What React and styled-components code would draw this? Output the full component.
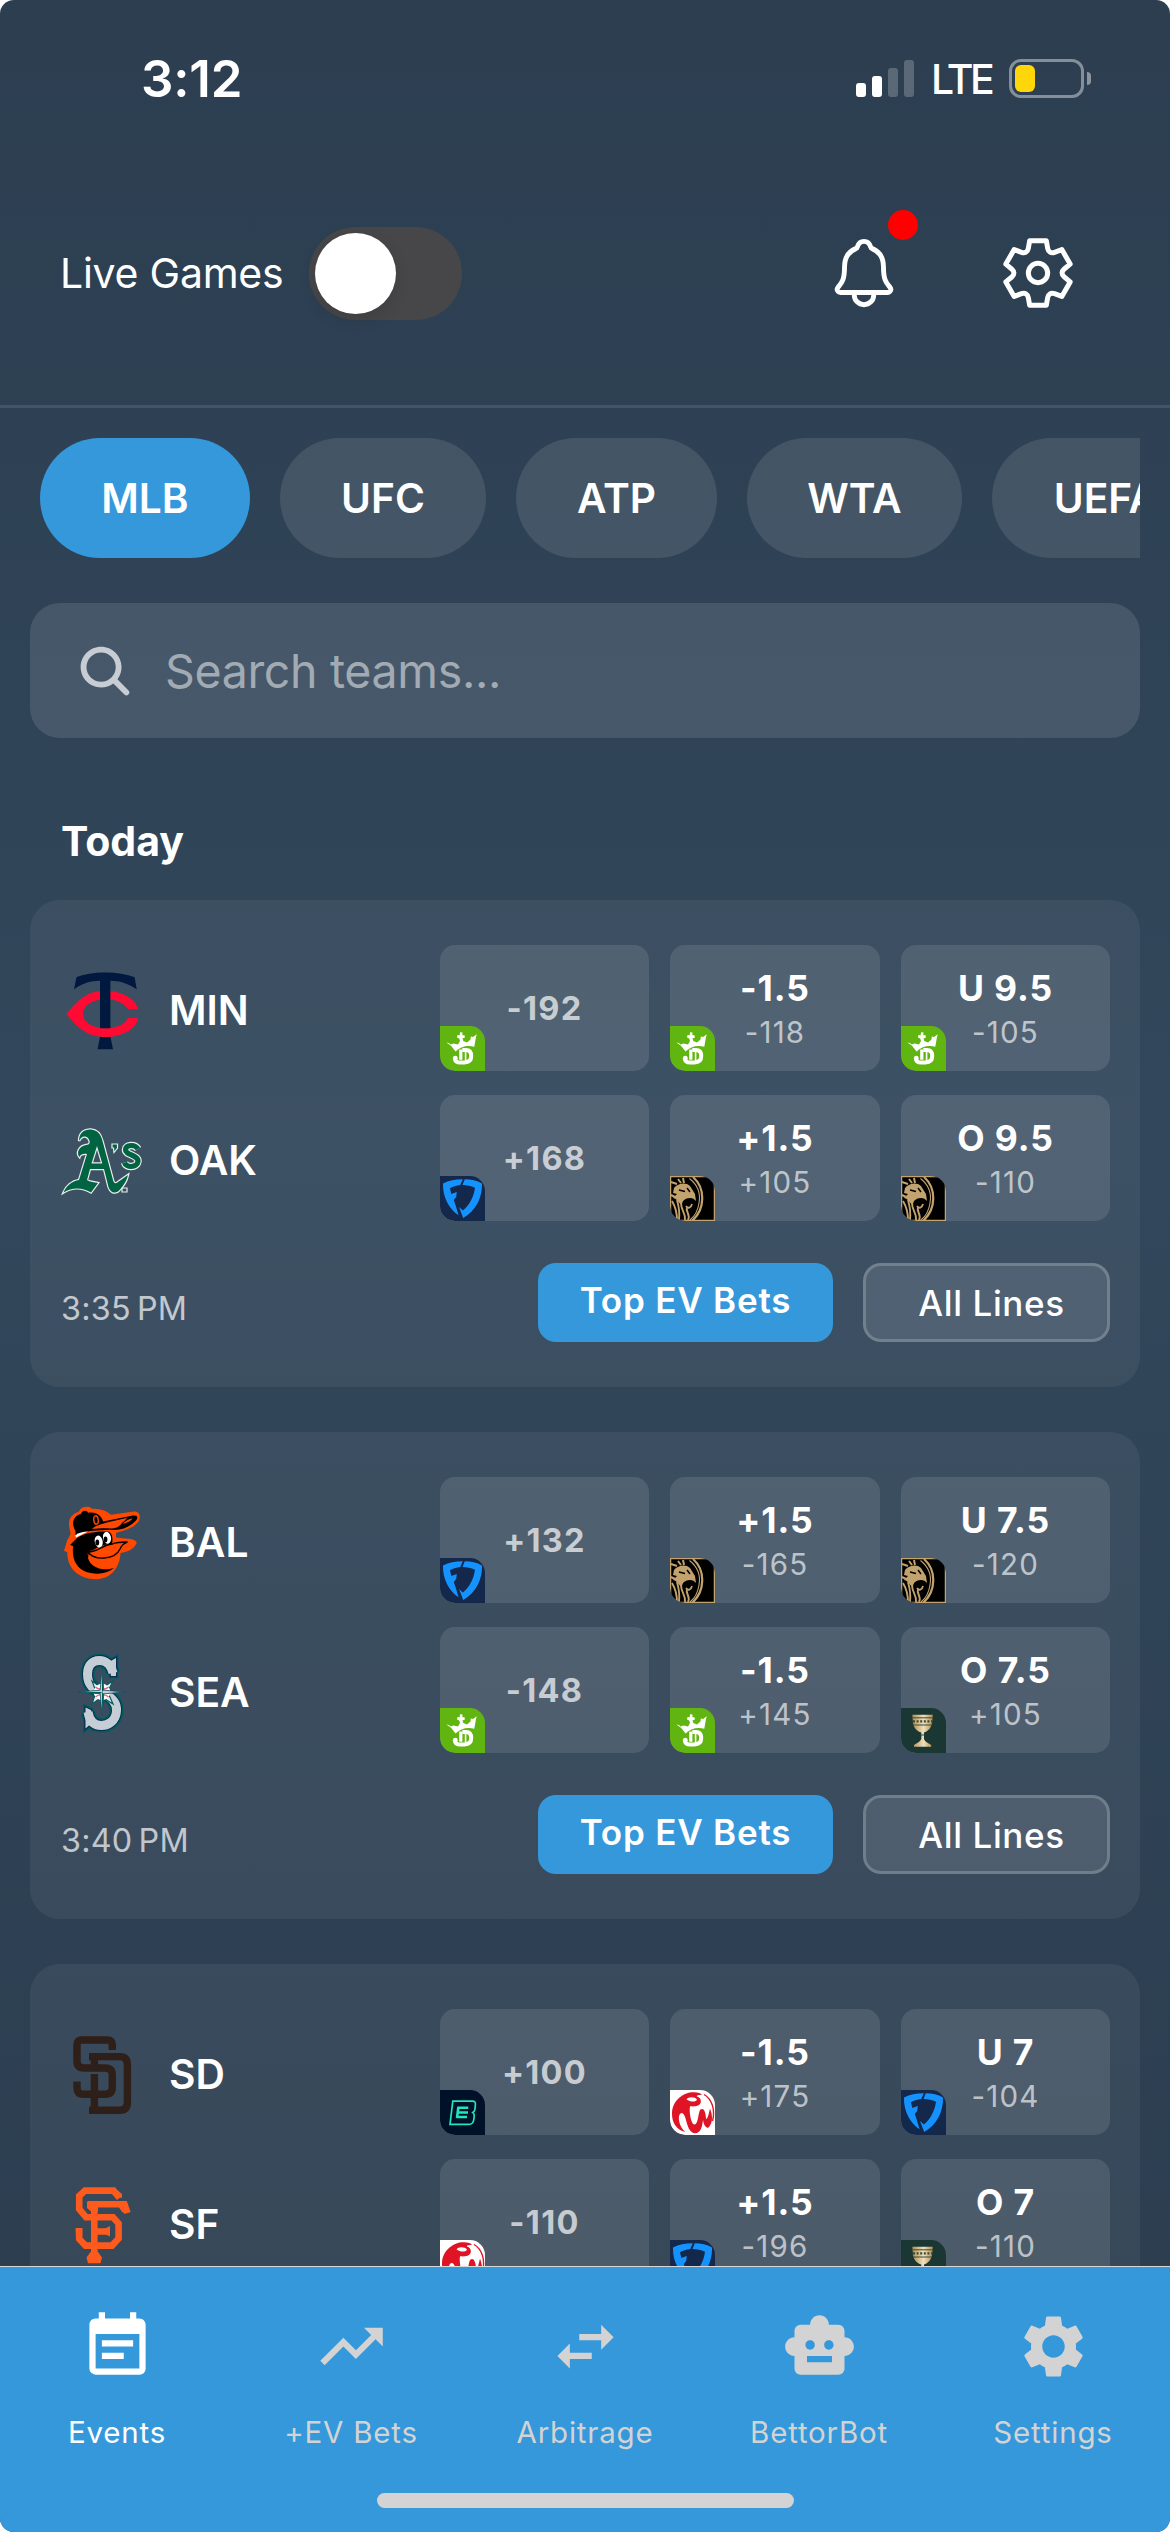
import React from "react";
import styled, { createGlobalStyle, css } from "styled-components";
import { IoNotificationsOutline, IoSearch } from "react-icons/io5";
import {
  MdEventNote,
  MdTrendingUp,
  MdSwapHoriz,
  MdSmartToy,
  MdSettings,
} from "react-icons/md";

const GlobalStyle = createGlobalStyle`
  * { box-sizing: border-box; }
  body {
    margin: 0;
    background: #fff;
    font-family: Inter, "Liberation Sans", sans-serif;
    color: #fff;
  }
  svg { display: block; }
`;

/* ---------- Shell ---------- */

const Screen = styled.div`
  display: flex;
  flex-direction: column;
  width: 1170px;
  height: 2532px;
  overflow: hidden;
  border-radius: 14px;
  background: linear-gradient(180deg, #2c3e50 0%, #32475b 45%, #2c3e50 90%);
`;

const StatusBar = styled.div`
  display: flex;
  align-items: center;
  flex-shrink: 0;
  height: 156px;
  padding: 0 79px 0 141px;
`;

const Clock = styled.div`
  font-size: 51px;
  font-weight: 600;
  letter-spacing: -0.2px;
  margin-right: auto;
`;

const Signal = styled.div`
  display: flex;
  align-items: flex-end;
  gap: 6px;
  height: 37px;
  margin-right: 17px;
`;

const SignalBar = styled.span`
  width: 10px;
  height: ${(p) => p.$height}px;
  border-radius: 3px;
  background: ${(p) => (p.$on ? "#fff" : "rgba(255, 255, 255, 0.22)")};
`;

const Network = styled.div`
  font-size: 41px;
  font-weight: 500;
  letter-spacing: -3.5px;
  width: 78px;
  padding-top: 2px;
`;

const Battery = styled.div`
  display: flex;
  align-items: center;
  gap: 3px;
`;

const BatteryCase = styled.div`
  width: 75px;
  height: 39px;
  padding: 3px;
  border: 3px solid rgba(255, 255, 255, 0.42);
  border-radius: 12px;
`;

const BatteryLevel = styled.div`
  width: 20px;
  height: 27px;
  border-radius: 6px;
  background: #ffd60a;
`;

const BatteryTip = styled.div`
  width: 4px;
  height: 13px;
  border-radius: 0 4px 4px 0;
  background: rgba(255, 255, 255, 0.45);
`;

/* ---------- Header ---------- */

const Header = styled.header`
  display: flex;
  align-items: center;
  flex-shrink: 0;
  height: 252px;
  padding: 0 93px 15px 60px;
  border-bottom: 3px solid rgba(255, 255, 255, 0.1);
`;

const ToggleLabel = styled.span`
  width: 249px;
  font-size: 41px;
  letter-spacing: -0.25px;
  white-space: nowrap;
`;

const Toggle = styled.div`
  width: 153px;
  height: 93px;
  padding: 6px;
  border-radius: 47px;
  background: #474749;
`;

const Knob = styled.div`
  width: 81px;
  height: 81px;
  border-radius: 50%;
  background: #fff;
  box-shadow: 0 6px 16px rgba(0, 0, 0, 0.12);
`;

const HeaderIcons = styled.div`
  display: flex;
  gap: 96px;
  margin-left: auto;
`;

const IconButton = styled.div`
  position: relative;
  width: 78px;
  height: 78px;
`;

const AlertDot = styled.span`
  position: absolute;
  top: -24px;
  left: 63px;
  width: 30px;
  height: 30px;
  border-radius: 50%;
  background: #ff0000;
`;

/* ---------- Filters ---------- */

const Leagues = styled.div`
  display: flex;
  flex-shrink: 0;
  gap: 30px;
  height: 120px;
  margin: 30px 30px 0;
  padding-left: 10px;
  overflow: hidden;
`;

const League = styled.div`
  display: flex;
  align-items: center;
  justify-content: center;
  flex: 0 0 ${(p) => p.$width}px;
  border-radius: 60px;
  font-size: 40.7px;
  font-weight: 600;
  background: ${(p) => (p.$active ? "#3498db" : "rgba(255, 255, 255, 0.1)")};
`;

const Search = styled.div`
  display: flex;
  align-items: center;
  flex-shrink: 0;
  height: 135px;
  margin: 45px 30px 0;
  padding-left: 45px;
  gap: 30px;
  border-radius: 30px;
  background: rgba(255, 255, 255, 0.11);
  color: rgba(255, 255, 255, 0.7);
`;

const Placeholder = styled.span`
  font-size: 46.5px;
  letter-spacing: -0.35px;
  color: rgba(255, 255, 255, 0.5);
`;

/* ---------- Games ---------- */

const Games = styled.main`
  display: flex;
  flex-direction: column;
  flex: 1;
  min-height: 0;
  overflow: hidden;
  padding: 78px 30px 0;
`;

const DayTitle = styled.h2`
  flex-shrink: 0;
  margin: 0 0 34px 31px;
  font-size: 41px;
  font-weight: 700;
  line-height: 50px;
`;

const Card = styled.section`
  flex-shrink: 0;
  height: 487px;
  margin-bottom: 45px;
  padding: 45px 30px;
  border-radius: 30px;
  background: rgba(255, 255, 255, 0.055);
`;

const TeamRow = styled.div`
  display: flex;
  height: 126px;
  margin-bottom: 24px;
`;

const Team = styled.div`
  display: flex;
  align-items: center;
  width: 380px;
  gap: 25px;
  padding-top: 4px;
  font-size: 40.7px;
  font-weight: 600;
`;

const Odds = styled.div`
  display: grid;
  grid-template-columns: 209px 210px 209px;
  gap: 21px;
`;

const OddsCell = styled.div`
  position: relative;
  display: flex;
  flex-direction: column;
  align-items: center;
  justify-content: center;
  overflow: hidden;
  border-radius: 15px;
  background: rgba(255, 255, 255, 0.105);
`;

const MoneyLine = styled.span`
  font-size: 32.5px;
  font-weight: 700;
  letter-spacing: 1.3px;
  color: rgba(255, 255, 255, 0.7);
`;

const Line = styled.span`
  padding-top: 3px;
  font-size: 35.5px;
  font-weight: 700;
  line-height: 44px;
  letter-spacing: 0.9px;
`;

const Price = styled.span`
  font-size: 29.5px;
  line-height: 42px;
  letter-spacing: 1.2px;
  color: rgba(255, 255, 255, 0.65);
`;

const BookBadge = styled.div`
  position: absolute;
  left: 0;
  bottom: 0;
  width: 45px;
  height: 45px;
  overflow: hidden;
  border-radius: 0 15px 0 15px;
`;

const CardFooter = styled.div`
  display: flex;
  align-items: center;
  height: 79px;
  margin-top: 42px;
  gap: 30px;
`;

const StartTime = styled.span`
  margin-right: auto;
  padding: 12px 0 0 1px;
  font-size: 32.3px;
  letter-spacing: 0.25px;
  color: rgba(255, 255, 255, 0.7);
`;

const Action = styled.div`
  height: 79px;
  border-radius: 18px;
  font-size: 35px;
  text-align: center;
  white-space: nowrap;
  ${(p) =>
    p.$primary
      ? css`
          width: 295px;
          line-height: 75px;
          font-weight: 600;
          letter-spacing: 0.8px;
          background: #3498db;
        `
      : css`
          width: 247px;
          padding-left: 10px;
          line-height: 75px;
          font-weight: 500;
          letter-spacing: 0.6px;
          border: 3px solid rgba(255, 255, 255, 0.2);
          background: rgba(255, 255, 255, 0.1);
          background-clip: border-box;
        `}
`;

/* ---------- Tab bar ---------- */

const TabBar = styled.nav`
  display: flex;
  flex-direction: column;
  align-items: center;
  flex-shrink: 0;
  height: 266px;
  padding-top: 42px;
  border-top: 1px solid #d8d8d8;
  background: #3498db;
`;

const Tabs = styled.div`
  display: grid;
  grid-template-columns: repeat(5, 234px);
`;

const Tab = styled.div`
  display: flex;
  flex-direction: column;
  align-items: center;
  gap: 30px;
  font-size: 29.5px;
  line-height: 36px;
  letter-spacing: 0.8px;
  color: ${(p) => (p.$active ? "#fff" : "#d3d3d3")};
`;

const HomeIndicator = styled.div`
  width: 417px;
  height: 15px;
  margin-top: 43px;
  border-radius: 8px;
  background: #d3d3d3;
`;

/* ---------- Drawings ---------- */

const TOOTH = [
  [-25, -97],
  [25, -97],
  [29, -74],
  [31, -63],
];

function rotate([x, y], degrees) {
  const a = (degrees * Math.PI) / 180;
  const rx = x * Math.cos(a) - y * Math.sin(a);
  const ry = x * Math.sin(a) + y * Math.cos(a);
  return `${rx.toFixed(1)} ${ry.toFixed(1)}`;
}

function gearPath() {
  let d = "";
  for (let i = 0; i < 6; i += 1) {
    const a = i * 60;
    d += `${i ? "L" : "M"}${rotate(TOOTH[0], a)} L${rotate(TOOTH[1], a)} `;
    d += `L${rotate(TOOTH[2], a)} C${rotate(TOOTH[3], a)} ${rotate([-31, -63], a + 60)} ${rotate([-29, -74], a + 60)} `;
  }
  return `${d}Z`;
}

const GearOutline = () => (
  <svg width="78" height="78" viewBox="-117 -117 234 234" fill="none" stroke="#fff" strokeWidth="15" strokeLinejoin="round">
    <path d={gearPath()} />
    <circle r="29" />
  </svg>
);

const Logo = ({ children }) => (
  <svg width="84" height="84" viewBox="0 0 84 84" fill="none">
    {children}
  </svg>
);

const Twins = () => (
  <Logo>
    <path
      fill="#ff0a32"
      d="M78 41.3C76 31 62 22.7 45 22.7C27 22.7 18 32 6.4 46C18 60 27 69 45 69C62 69 77 61 78 50H68C65 56 57 60.3 46 60.3C32 60.3 23 54 23 46C23 38 32 31.3 46 31.3C57 31.3 65 36 68 41.3Z"
    />
    <path
      fill="#02193f"
      d="M14 21.5L16.4 9.3C30 2.8 60 2.8 74.6 9.3L76.8 21.5C68 15 59 12.8 50.4 12.7V60.3H40V12.7C31 12.8 22 15 14 21.5ZM40 69H50.5L53 81.3H37.5Z"
    />
  </Logo>
);

const AS_LETTER =
  "M19 23C19 14 25 11 31 11.5C38 12 41 17 42.5 23L53 62C54 66 56 66 58 64L68 57C67 62 63 69 58 73.5C54 76 50 74 48.5 69L44 51H30L27 62C30 64 34 64 38 65L31 74.5C22 69 12 69 3.5 74.5C6 68 12 63 19 62L27 36C23 35 20 37 19.5 39C16 35 19 28 26 27C30 27 31 24 28 20C24 17 21 19 19 23ZM31.5 45.5H42.3L37 28Z";
const AS_CURL = "M78 31C75 26 66 26.5 65.5 31.5C65 37 78.5 37 78 43.5C77 50 66 50 64.5 44.5";

const Athletics = () => (
  <Logo>
    <path d={AS_LETTER} fill="#006341" stroke="#e8eeec" strokeWidth="2.4" paintOrder="stroke" fillRule="evenodd" />
    <path d={AS_CURL} stroke="#e8eeec" strokeWidth="7.5" />
    <path d={AS_CURL} stroke="#006341" strokeWidth="5.2" />
    <path d="M52 26H57.5V30L54 34.5L53.5 30H52Z" fill="#006341" stroke="#e8eeec" strokeWidth="1.2" />
    <path d="M62 70H67V74H62Z" stroke="#e8eeec" strokeWidth="1.2" />
  </Logo>
);

const Orioles = () => (
  <Logo>
    <path
      fill="#ff4800"
      d="M27 6.8C21 6.8 20 10 19 11.5C11 14 8 20 9.3 27L10.5 34L7 41L4 51L7.3 52C7 69 19 79.3 36 79.3C52 79 60 66 60.5 53C68 52 74 49 76.7 43C76 39 70 39 65 38.5L56 37.5V33C66 30 76 27 79.3 20C81 14 78 11.3 74 11.5L51 14.8C45 9.5 38 9 32 8.8C30 7 29 6.8 27 6.8Z"
    />
    <path
      fill="#000"
      d="M15.5 31C10 22 15 15 21 14C22 10 27 10 28 12.8C36 11 42 16 43 21.5L73 15.5C79 15 78 19 75 21.5C68 28 60 31 50 29.7L33 30.8C26 31 20 34 15.5 37Z"
    />
    <path fill="#ff4800" d="M32 29C36 25 43 23 67 18C63 24 58 29 50 28.5C42 28 37 29 32 29Z" />
    <path d="M61 25C65 20 70 18 74 17.5C72 21 66 24 61 25Z" fill="#ff4800" stroke="#000" strokeWidth="1.2" />
    <ellipse cx="36" cy="20" rx="2.2" ry="4.2" stroke="#ff4800" strokeWidth="1.4" transform="rotate(-8 36 20)" />
    <path d="M15 35.5C19 32.5 23 31.5 28 31.5L16 37.5Z" fill="#fff" />
    <path
      fill="#000"
      d="M17 38C24 33 35 31 48 31.5C53 33 53 40 52 44C40 44 34 51 29 51L28 58C30 66 40 72 54 68C46 75 34 75 24 71C15 66 12 58 13 46L10 45Z"
    />
    <ellipse cx="38.7" cy="41.5" rx="4" ry="6" fill="#fff" transform="rotate(-12 38.7 41.5)" />
    <ellipse cx="47" cy="37.8" rx="4" ry="6" fill="#fff" transform="rotate(-12 47 37.8)" />
    <ellipse cx="37.3" cy="42.5" rx="1.9" ry="3" fill="#000" />
    <ellipse cx="45.5" cy="39.5" rx="1.9" ry="3" fill="#000" />
    <path
      d="M28 52C34 61 55 60 60 49C62 44 65 43 67.5 42C60 42 56 42.5 52 44C42 45 38 52 28 52ZM27 56C27 53 26 52 29 50.5"
      stroke="#000"
      strokeWidth="1.4"
      fill="#ff4800"
    />
  </Logo>
);

const MARINERS_S =
  "M53 23C51 14 45 10.5 39.5 10.5C31 10.5 27.5 17 27.5 24C27.5 36 34 39 42 43C52 47 57 53 56.5 61C56 71 48 75.5 41.5 75.5C34 75.5 29.5 71 28 62";
const MARINERS_SERIFS = "M49 12L56 8V26H51ZM25.5 57.5L31 60L33 72L25.5 78.5Z";

const Mariners = () => (
  <Logo>
    <g stroke="#005c5c">
      <path d={MARINERS_S} strokeWidth="14" />
      <path d={MARINERS_SERIFS} strokeWidth="5" fill="#005c5c" />
    </g>
    <g stroke="#0c2c56">
      <path d={MARINERS_S} strokeWidth="11" />
      <path d={MARINERS_SERIFS} strokeWidth="2.4" fill="#0c2c56" />
    </g>
    <path d={MARINERS_S} stroke="#c4ced4" strokeWidth="9" />
    <path d={MARINERS_SERIFS} fill="#c4ced4" />
    <path
      d="M32 31L39 36L42 34L45 36L53 31L49 39L50 42L49 45L53 54L45 49L42 51L39 49L32 54L35 45L34 42L35 39Z"
      fill="#e9eff0"
      stroke="#005c5c"
      strokeWidth="1.2"
    />
    <circle cx="42" cy="42" r="8.3" fill="#fff" />
    <path d="M35.5 37C38 40 46 40 48.5 37M35.5 47C38 44 46 44 48.5 47" stroke="#e8607a" strokeWidth="1.2" />
    <path d="M42 18L43.8 40.2L65.5 42L43.8 43.8L42 65L40.2 43.8L18.5 42L40.2 40.2Z" fill="#c4d3d6" stroke="#0c4a5c" strokeWidth="0.8" />
    <path d="M42 20V42H20L40.2 43.8L42 42L43.8 40.2ZM42 42V63L43.8 43.8Z" fill="#005c5c" />
  </Logo>
);

const Padres = () => (
  <Logo>
    <g stroke="#2f1f19" strokeWidth="7.4">
      <path d="M52.3 18V13Q52.3 8 47 8H22Q17 8 17 13V29Q17 36 24 36H45Q52.3 36 52.3 43V55Q52.3 62.3 45 62.3H24Q17 62.3 17 56V49.5" />
      <path d="M29 24.6H60Q67.4 24.6 67.4 33V70Q67.4 78.2 60 78.2H29" />
      <path d="M34.4 25V37M34.4 42V79" />
    </g>
  </Logo>
);

const Giants = () => (
  <Logo>
    <g stroke="#fd5a1e" strokeWidth="6.6">
      <path d="M59.5 16L53.5 8.6H25L19.2 14V27L26 35.2H53L58.6 41.5V56.5L52 63.6H25.5L19.2 57V46" />
      <path d="M28 22.3H64.5L67.5 31" />
      <path d="M34.3 22V78M34 49.5H50" />
    </g>
    <path d="M27 19.5V26L31 29.5H38V19ZM64 18.8L69 30.5H62.5L58 24ZM30.5 70L26.5 75.5L28 81.3H40.5L42 75.5L38 70ZM45 46.5L50 44V54.5L45 52ZM15.5 46H22V51L16 55ZM56 15.7H62V12L55 6Z" fill="#fd5a1e" />
  </Logo>
);

const Book = ({ bg, children }) => (
  <svg width="45" height="45" viewBox="0 0 45 45" fill="none">
    <rect width="45" height="45" fill={bg} />
    {children}
  </svg>
);

const DraftKings = () => (
  <Book bg="#61b510">
    <path
      fill="#fff"
      d="M6.4 16.5L9 17L10.5 18.5L13.5 17.5L18 18.5L20 15L19.2 12.5L17 11.5L17.5 9L19.7 9.3L20 6.3L22.5 6.5L22.3 9L24.8 9.5L24.6 12L22.5 12.3L23.3 15L27 16.5L30.5 13.5L30.8 10.5L33 11L36.8 8.3L36 11L34.3 20.8C28 18.6 20 20.5 15.6 25.6L11 19.8Z"
    />
    <path d="M22.3 24H26C30 24 31.2 27 31.2 30C31.2 34.2 28.8 36.4 24.5 36.4H20.5C17 36.4 14.9 35 14.9 32.4" stroke="#fff" strokeWidth="4" />
    <path d="M20.8 23.4V33.8" stroke="#fff" strokeWidth="3.2" />
    <path d="M25.6 24.5V35.5" stroke="#fff" strokeWidth="1.6" />
    <circle cx="15.3" cy="32.2" r="2.4" fill="#fff" />
  </Book>
);

const FanDuel = () => (
  <Book bg="#14284b">
    <path
      fill="#1493ff"
      d="M3 7.5C9 4.5 15 3.3 22.8 3.3L20.3 9C16 9.5 13 10.5 10 12.3L11.3 18L16.8 16L16.2 21L13.8 24L15.5 29L18.6 39.3C9 33 2.5 21 3 7.5ZM24.8 3.3C31 3.3 37 4.5 42 7.5C42.5 21 36 35 23.2 42L19 31L22.9 34.5C30 29 34 20 35 11.8C31 10 27 9 22.5 9Z"
    />
  </Book>
);

const BetMgm = () => (
  <Book bg="#000">
    <g stroke="#c2a36e">
      <path d="M23 1C35.5 12 35.5 33 22 45" strokeWidth="2.2" />
      <path d="M19.5 2.5C29 10 30.5 19 29 27C28 34 25 40 20 44" strokeWidth="1.1" />
      <path d="M2 25C5 30 7 36 7 44M7 24C9 31 10 36 9 44M11 27C11 35 16 37 15 44M17 31C15 36 21 38 18 44" strokeWidth="1.9" />
      <path d="M1 6L7 8M8 3L11 7M13 2L14 7M1 19L5 21" strokeWidth="2" />
    </g>
    <path
      fill="#c2a36e"
      d="M4 12C8 7 16 6 20 10L25 18L26 25C24 23 23 22 20 22C15 22 12 25 12 29C8 27 8 23 3 22L7 18L3 17Z"
    />
    <path d="M9 14L15 15.5M17 12L20 16" stroke="#000" strokeWidth="1.4" />
    <path d="M16 30C18 33 21 32 22 28" stroke="#c2a36e" strokeWidth="1.8" />
    <rect x="0.6" y="0.6" width="43.8" height="43.8" stroke="#c2a36e" strokeWidth="1.3" />
  </Book>
);

const Goblet = () => (
  <Book bg="#1a3733">
    <defs>
      <linearGradient id="goblet" x1="0" x2="1" y1="0" y2="0">
        <stop offset="0" stopColor="#b3904f" />
        <stop offset="0.55" stopColor="#f0e0bd" />
        <stop offset="1" stopColor="#b08c4d" />
      </linearGradient>
    </defs>
    <path
      fill="url(#goblet)"
      d="M11.4 6.7H31.8L31 15C30 20 27 23.5 23 24.5V31C24 34 28 35.5 30.2 37V38.8H13V37C15.5 35.5 19 34 20.3 31V24.5C16 23.5 13 20 12 15Z"
    />
    <path d="M11.6 9.8H31.6M12 17H31" stroke="#3b4a38" strokeWidth="1" />
    <path d="M12 13.4H31" stroke="#3b4a38" strokeWidth="2.2" strokeDasharray="2 1.6" />
    <path d="M19.5 27H24" stroke="#3b4a38" strokeWidth="1" />
  </Book>
);

const EspnBet = () => (
  <Book bg="#001128">
    <path
      d="M12.8 11.2H32.5Q35.8 11.2 35.4 14.5L35 19Q34.7 21.5 32.8 22.6Q34.6 23.8 34.2 26.5L33.7 30Q33 34.4 29 34.4H10Z"
      stroke="#1ee6c1"
      strokeWidth="1.7"
    />
    <path d="M17.5 17.8H28.3M17 22.5H28M16.4 27H27M18.4 17L17 28" stroke="#1ee6c1" strokeWidth="2.6" />
  </Book>
);

const ResortsWorld = () => (
  <Book bg="#fff">
    <path
      fill="#df1525"
      fillRule="evenodd"
      d="M2 24C2 10 14 2 24 2.3C28 2.5 31 3 32 4.8C29 5 26 5.5 27 6.5C32 8 32 14 28 15.5C24 17 21 16 20 16.5C19 21 21 34.5 24.5 34.5C28.5 34.5 28 22 30.5 19.5C34 17 36 23 36 29C37.5 29 38.5 25 40 18.5C42 24 44 32 38 38C35 37 33.5 34 33 30C32 37 31 43.2 25 43.2C16 43 17 24 12 23C7 23 8 36 15.5 42C6 40 2 32 2 24ZM16.5 9.5C18 6.5 25 6.5 27 9.5C26 12.5 20 12 16.5 9.5Z"
    />
    <path d="M34 4.5C42 9 45.5 20 42.5 31" stroke="#df1525" strokeWidth="1.4" />
  </Book>
);

/* ---------- Data ---------- */

const BOOKS = {
  dk: DraftKings,
  fd: FanDuel,
  mgm: BetMgm,
  cup: Goblet,
  espn: EspnBet,
  rw: ResortsWorld,
};

const LEAGUES = [
  { name: "MLB", width: 210, active: true },
  { name: "UFC", width: 206 },
  { name: "ATP", width: 201 },
  { name: "WTA", width: 215 },
  { name: "UEFA", width: 228 },
];

const GAMES = [
  {
    time: "3:35\u202fPM",
    teams: [
      { code: "MIN", logo: Twins, odds: [["dk", "-192"], ["dk", "-1.5", "-118"], ["dk", "U 9.5", "-105"]] },
      { code: "OAK", logo: Athletics, odds: [["fd", "+168"], ["mgm", "+1.5", "+105"], ["mgm", "O 9.5", "-110"]] },
    ],
  },
  {
    time: "3:40\u202fPM",
    teams: [
      { code: "BAL", logo: Orioles, odds: [["fd", "+132"], ["mgm", "+1.5", "-165"], ["mgm", "U 7.5", "-120"]] },
      { code: "SEA", logo: Mariners, odds: [["dk", "-148"], ["dk", "-1.5", "+145"], ["cup", "O 7.5", "+105"]] },
    ],
  },
  {
    teams: [
      { code: "SD", logo: Padres, odds: [["espn", "+100"], ["rw", "-1.5", "+175"], ["fd", "U 7", "-104"]] },
      { code: "SF", logo: Giants, odds: [["rw", "-110"], ["fd", "+1.5", "-196"], ["cup", "O 7", "-110"]] },
    ],
  },
];

const TABS = [
  { label: "Events", icon: MdEventNote, active: true },
  { label: "+EV Bets", icon: MdTrendingUp },
  { label: "Arbitrage", icon: MdSwapHoriz },
  { label: "BettorBot", icon: MdSmartToy },
  { label: "Settings", icon: MdSettings },
];

const SIGNAL = [14, 21, 29, 37];

/* ---------- Composition ---------- */

function OddsBox({ book, line, price }) {
  const Badge = BOOKS[book];
  return (
    <OddsCell>
      {price ? (
        <>
          <Line>{line}</Line>
          <Price>{price}</Price>
        </>
      ) : (
        <MoneyLine>{line}</MoneyLine>
      )}
      <BookBadge>
        <Badge />
      </BookBadge>
    </OddsCell>
  );
}

function GameCard({ game }) {
  return (
    <Card>
      {game.teams.map(({ code, logo: TeamLogo, odds }) => (
        <TeamRow key={code}>
          <Team>
            <TeamLogo />
            {code}
          </Team>
          <Odds>
            {odds.map(([book, line, price], i) => (
              <OddsBox key={i} book={book} line={line} price={price} />
            ))}
          </Odds>
        </TeamRow>
      ))}
      {game.time && (
        <CardFooter>
          <StartTime>{game.time}</StartTime>
          <Action $primary>Top EV Bets</Action>
          <Action>All Lines</Action>
        </CardFooter>
      )}
    </Card>
  );
}

export default function App() {
  return (
    <>
      <GlobalStyle />
      <Screen>
        <StatusBar>
          <Clock>3:12</Clock>
          <Signal>
            {SIGNAL.map((height, i) => (
              <SignalBar key={height} $height={height} $on={i < 2} />
            ))}
          </Signal>
          <Network>LTE</Network>
          <Battery>
            <BatteryCase>
              <BatteryLevel />
            </BatteryCase>
            <BatteryTip />
          </Battery>
        </StatusBar>

        <Header>
          <ToggleLabel>Live Games</ToggleLabel>
          <Toggle>
            <Knob />
          </Toggle>
          <HeaderIcons>
            <IconButton>
              <IoNotificationsOutline size={78} />
              <AlertDot />
            </IconButton>
            <IconButton>
              <GearOutline />
            </IconButton>
          </HeaderIcons>
        </Header>

        <Leagues>
          {LEAGUES.map(({ name, width, active }) => (
            <League key={name} $width={width} $active={active}>
              {name}
            </League>
          ))}
        </Leagues>

        <Search>
          <IoSearch size={60} />
          <Placeholder>Search teams...</Placeholder>
        </Search>

        <Games>
          <DayTitle>Today</DayTitle>
          {GAMES.map((game) => (
            <GameCard key={game.teams[0].code} game={game} />
          ))}
        </Games>

        <TabBar>
          <Tabs>
            {TABS.map(({ label, icon: Icon, active }) => (
              <Tab key={label} $active={active}>
                <Icon size={75} />
                {label}
              </Tab>
            ))}
          </Tabs>
          <HomeIndicator />
        </TabBar>
      </Screen>
    </>
  );
}
